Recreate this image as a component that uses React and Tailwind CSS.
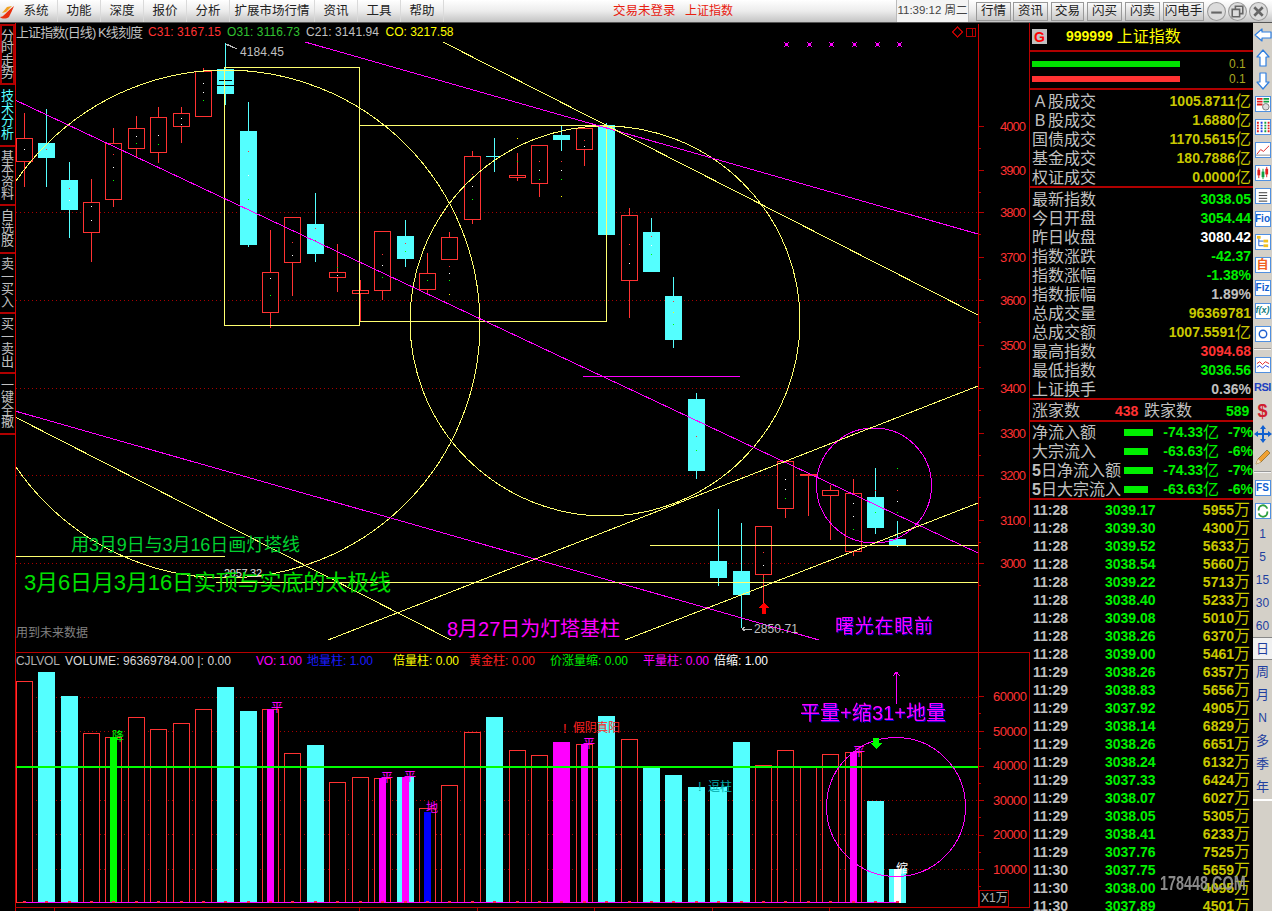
import React from "react";

const RED = "#ff3232";
const CY = "#54ffff";
const MG = "#ff00ff";
const YL = "#ffff70";
const GRID = "#a80000";
const AX = "#b80000";

const candles = [
  [24.5,113,138,161,187,"r"],[46.5,109,143,158,187,"c"],[69.5,162,180,210,238,"c"],[91.5,179,202,232,262,"r"],
  [113.5,128,143,199,207,"r"],[136.5,116,128,148,157,"r"],[158.5,107,117,152,163,"r"],[181.5,107,113,126,143,"r"],
  [203.5,68,71,116,117,"r"],[225.5,43,69,94,105,"c"],[248.5,102,131,245,247,"c"],[270.5,230,272,312,328,"r"],
  [292.5,217,217,262,296,"r"],[315.5,193,224,254,262,"c"],[337.5,244,272,277,292,"r"],[360.5,280,290,293,322,"r"],
  [382.5,231,231,290,300,"r"],[405.5,220,236,259,267,"c"],[427.5,253,273,289,295,"r"],[449.5,232,237,259,259,"r"],
  [472.5,151,156,219,224,"r"],[517.5,153,175,177,181,"r"],[539.5,145,145,183,197,"r"],[561.5,126,135,140,151,"c"],
  [584.5,128,128,149,166,"r"],[606.5,123,125,235,237,"c"],[629.5,208,215,280,318,"r"],[651.5,218,232,272,272,"c"],
  [673.5,277,296,340,348,"c"],[696.5,393,399,471,479,"c"],[718.5,509,561,578,586,"c"],[741.5,523,571,595,628,"c"],
  [763.5,526,526,574,603,"r"],[785.5,461,461,508,518,"r"],[830.5,485,490,495,540,"r"],[853.5,479,493,551,556,"r"],
  [875.5,468,497,528,534,"c"],[897.5,521,539,545,547,"c"],
];

const dots = [
  [24,149,"#fff"],[46,149,RED],[69,188,RED],[69,200,"#fff"],[91,206,"#fff"],[91,220,"#fff"],[113,154,RED],[113,167,"#fff"],[113,180,"#0f0"],
  [136,136,"#fff"],[136,143,"#0f0"],[158,135,"#fff"],[158,144,"#0f0"],[181,118,"#fff"],[181,124,"#fff"],[203,83,"#fff"],[203,92,"#fff"],[203,100,"#0f0"],
  [248,151,RED],[248,175,"#fff"],[248,199,"#0f0"],[270,278,"#fff"],[270,295,"#0f0"],[292,242,RED],[292,255,"#fff"],[315,228,RED],[315,240,"#0f0"],
  [337,259,RED],[337,267,"#0f0"],[337,275,"#fff"],[382,254,RED],[382,265,"#fff"],[382,277,"#0f0"],[405,243,RED],[405,251,"#0f0"],[427,280,"#0f0"],
  [449,266,RED],[449,273,"#fff"],[449,280,"#0f0"],[449,294,"#ff0"],[472,174,RED],[472,186,"#fff"],[472,199,"#0f0"],[517,138,"#ff0"],[517,161,"#0f0"],
  [539,161,RED],[539,170,"#fff"],[539,179,"#0f0"],[561,161,RED],[561,170,"#fff"],[561,179,"#0f0"],[561,196,"#ff0"],[584,140,RED],[584,146,"#fff"],
  [606,160,RED],[606,180,"#ff0"],[606,199,"#0f0"],[629,244,RED],[629,263,"#fff"],[651,236,RED],[651,245,"#fff"],[651,254,"#0f0"],
  [673,301,RED],[673,312,"#ff0"],[673,324,"#0f0"],[696,436,RED],[696,450,"#0f0"],[763,552,RED],[763,565,"#fff"],[763,578,"#0f0"],
  [785,479,"#fff"],[785,489,"#fff"],[785,498,"#0f0"],[853,503,"#fff"],[853,516,"#fff"],[853,529,"#0f0"],[875,490,RED],[875,512,"#0f0"],
  [897,468,"#0f0"],[897,490,RED],[897,501,"#fff"],[897,512,"#0f0"],
];

const vols = [
  [24.5,681,"r"],[46.5,672,"c"],[69.5,696,"c"],[91.5,733,"r"],[113.5,737,"r","#00ff00"],[136.5,717,"r"],[158.5,729,"r"],[181.5,723,"r"],
  [203.5,709,"r"],[225.5,687,"c"],[248.5,711,"c"],[270.5,709,"r",MG],[292.5,753,"r"],[315.5,745,"c"],[337.5,782,"r"],[360.5,777,"r"],
  [382.5,778,"r",MG],[405.5,777,"c",MG],[427.5,808,"r","#0000ff",812],[449.5,785,"r"],[472.5,732,"r"],[494.5,717,"c"],[517.5,750,"r"],[539.5,755,"r"],
  [561.5,742,"m"],[584.5,744,"r",MG],[606.5,716,"c"],[629.5,739,"r"],[651.5,767,"c"],[673.5,775,"c"],[696.5,787,"c"],[718.5,787,"c"],
  [741.5,742,"c"],[763.5,765,"r"],[785.5,750,"r"],[808.5,767,"r"],[830.5,754,"r"],[853.5,752,"r",MG],[875.5,801,"c"],[897.5,869,"c","#ffffff"],
];

const priceAxis = [[126,"4000"],[170,"3900"],[212,"3800"],[257,"3700"],[300,"3600"],[345,"3500"],[388,"3400"],[433,"3300"],[475,"3200"],[520,"3100"],[563,"3000"]];
const volAxis = [[696,"60000"],[731,"50000"],[765.5,"40000"],[800,"30000"],[834.5,"20000"],[869,"10000"]];

const L = ({ p, c = YL, w = 1 }) => <line x1={p[0]} y1={p[1]} x2={p[2]} y2={p[3]} stroke={c} strokeWidth={w} />;
const T = ({ x, y, c, s = 12, len, anchor, children, className }) => (
  <text x={x} y={y} fill={c} fontSize={s} dominantBaseline="central" textAnchor={anchor} textLength={len} lengthAdjust={len ? "spacing" : undefined} className={className} stroke="none">{children}</text>
);

function Chart() {
  return (
    <svg width="1015" height="888" viewBox="15 23 1015 888" shapeRendering="crispEdges" className="block shrink-0">
      <defs>
        <clipPath id="pp"><rect x="16" y="24" width="962" height="628" /></clipPath>
      </defs>
      {[212,300,388,475,563].map((y) => <line key={y} x1="16" x2="978" y1={y+0.5} y2={y+0.5} stroke={GRID} strokeDasharray="1 3" />)}
      {[697,731,766,800,834,869].map((y) => <line key={y} x1="16" x2="978" y1={y+0.5} y2={y+0.5} stroke={GRID} strokeDasharray="1 3" />)}
      {candles.map(([x,wt,bt,bb,wb,k]) => {
        const c = k === "r" ? RED : CY;
        return (
          <g key={x}>
            <line x1={x} x2={x} y1={wt} y2={wb} stroke={c} />
            {k === "r" ? <rect x={x-8} y={bt+0.5} width="16" height={bb-bt} fill="#000" stroke={c} /> : <rect x={x-8.5} y={bt} width="17" height={bb-bt} fill={c} />}
          </g>
        );
      })}
      <path d="M494.5 138V172M486 156.5H501" stroke={CY} />
      <path d="M808.5 474V516M800 474.5H817" stroke={RED} /><rect x="800" y="474" width="17" height="2" fill={RED} />
      <rect x="219" y="80" width="13" height="1" fill="#000" /><rect x="217" y="85" width="17" height="1" fill="#000" />
      {dots.map(([x,y,c],i) => <rect key={i} x={x} y={y} width="1" height="1" fill={c} />)}
      <g clipPath="url(#pp)" fill="none">
        <circle cx="226" cy="324" r="254" stroke={YL} />
        <circle cx="605" cy="321" r="195" stroke={YL} />
        <circle cx="874" cy="485.5" r="57.5" stroke={MG} />
        <rect x="224.5" y="67.5" width="135" height="258" stroke={YL} />
        <path d="M359.5 125.5H606.5V321.5H359.5" stroke={YL} />
        <L p={[15,100,978,553]} c={MG} /><L p={[305,42,978,234]} c={MG} /><L p={[15,411,819,640]} c={MG} />
        <L p={[583,376.5,740,376.5]} c={MG} />
        <L p={[443,42,978,315]} /><L p={[328,640,978,386]} /><L p={[625,640,978,503]} /><L p={[15,417,451,640]} />
        <L p={[16,556.5,225,556.5]} /><L p={[216,582.5,978,582.5]} /><L p={[650,545.5,978,545.5]} />
      </g>
      {[786,809,831,854,877,899].map((x) => <path key={x} d={`M${x-2} 42h1v1h-1zM${x+2} 42h1v1h-1zM${x-1} 43h3v3h-3zM${x-2} 46h1v1h-1zM${x+2} 46h1v1h-1z`} fill={MG} stroke="none" />)}
      <path d="M957.5 27L962.5 32L957.5 37L952.5 32Z" fill="none" stroke={AX} />
      <path d="M966.5 28.5H975.5V36.5H966.5ZM972.5 28.5V36.5" fill="none" stroke={AX} />
      <path d="M225.5 44H229M226 44L229 46M226 44L237 49" stroke="#bbb" fill="none" />
      <path d="M742 629H752M742 629L745 627M742 629L745 631" stroke="#bbb" fill="none" />
      <path d="M764 602L769 608H766V614H762V608H759Z" fill="#ff0000" stroke="none" />
      <T x="16" y="32" c="#c0c0c0" s={13} len={127}>上证指数(日线) K线刻度</T>
      <T x="148" y="32" c={RED} len={73}>C31: 3167.15</T>
      <T x="227" y="32" c="#30c030" len={73}>O31: 3116.73</T>
      <T x="306" y="32" c="#c0c0c0" len={73}>C21: 3141.94</T>
      <T x="385.5" y="32" c="#ffff00" len={68}>CO: 3217.58</T>
      <T x="240" y="52" c="#c0c0c0" len={44}>4184.45</T>
      <T x="224" y="573" c="#e0e0e0" s={11} len={38}>2957.32</T>
      <T x="754" y="629" c="#c0c0c0" len={44}>2850.71</T>
      <T x="16" y="633" c="#808080" s={12} len={72}>用到未来数据</T>
      <T x="71" y="545" c="#00d030" s={18} len={229}>用3月9日与3月16日画灯塔线</T>
      <T x="24" y="582" c="#00e000" s={22} len={367}>3月6日月3月16日实顶与实底的太极线</T>
      <T x="447" y="629" c={MG} s={20} len={173}>8月27日为灯塔基柱</T>
      <T x="835" y="626" c={MG} s={19} len={98} className="[filter:drop-shadow(1px_1px_0_#0000c0)]">曙光在眼前</T>

      {vols.map(([x,t,k,inner,it]) => (
        <g key={x}>
          {k === "r" && <rect x={x-8} y={t+0.5} width="16" height={902-t} fill="#000" stroke={RED} />}
          {k === "c" && <rect x={x-8.5} y={t} width="17" height={903-t} fill={CY} />}
          {k === "m" && <rect x={x-8.5} y={t} width="17" height={903-t} fill={MG} />}
          {inner && <rect x={x-3.5} y={it || t} width="7" height={903-(it || t)} fill={inner} />}
        </g>
      ))}
      <rect x="16" y="766" width="962" height="2" fill="#00ff00" />
      <rect x="24" y="902" width="873" height="1" fill={MG} />
      {vols.map(([x]) => <rect key={x} x={x-1.5} y="901" width="3" height="2" fill="#ff2050" />)}
      <circle cx="896" cy="807" r="69.5" fill="none" stroke={MG} />
      <path d="M896.5 704V672M896.5 672L893 676M896.5 672L900 676" stroke={MG} fill="none" />
      <path d="M873 738H879V743H882L876 749L870 743H873Z" fill="#00ff00" stroke="none" />
      <T x="16" y="660.5" c="#b0b0b0" len={44}>CJLVOL</T>
      <T x="65" y="660.5" c="#d8d8d8" len={166}>VOLUME: 96369784.00 |: 0.00</T>
      <T x="256" y="660.5" c={MG} len={46}>VO: 1.00</T>
      <T x="307" y="660.5" c="#1c1cff" len={66}>地量柱: 1.00</T>
      <T x="393" y="660.5" c="#ffff00" len={66}>倍量柱: 0.00</T>
      <T x="469" y="660.5" c="#ff2020" len={66}>黄金柱: 0.00</T>
      <T x="550" y="660.5" c="#00f000" len={78}>价涨量缩: 0.00</T>
      <T x="643" y="660.5" c={MG} len={66}>平量柱: 0.00</T>
      <T x="714" y="660.5" c="#ffffff" len={54}>倍缩: 1.00</T>
      <T x="271" y="708" c={MG}>平</T><T x="381" y="778" c={MG}>平</T><T x="404" y="777" c={MG}>平</T>
      <T x="583" y="744" c={MG}>平</T><T x="853" y="752" c={MG}>平</T>
      <T x="426" y="808" c={MG}>地</T><T x="112" y="737" c="#00ff00">降</T><T x="896" y="869" c="#ffffff">缩</T>
      <T x="563" y="728" c="#ff2020" s={13}>!</T><T x="573" y="728" c="#ff2020" len={47}>假阴真阳</T>
      <T x="698" y="786" c="#00a8a8" s={13}>!</T><T x="708" y="787" c="#00a8a8">逗柱</T>
      <T x="800" y="713" c={MG} s={20} len={146} className="[filter:drop-shadow(1px_1px_0_#0000c0)]">平量+缩31+地量</T>

      <rect x="15" y="23" width="1" height="888" fill="#d00000" />
      <rect x="978" y="24" width="1" height="883" fill="#d00000" />
      <rect x="1029" y="23" width="1" height="504" fill={AX} />
      <rect x="1029" y="652" width="1" height="255" fill={AX} />
      <rect x="15" y="652" width="1015" height="1" fill={AX} />
      <rect x="15" y="907" width="1015" height="1" fill={AX} />
      {priceAxis.map(([y,t]) => (
        <g key={t}>
          <rect x="979" y={y} width="5" height="1" fill={AX} />
          <rect x="979" y={y+22} width="2" height="1" fill={AX} />
          <T x="1000" y={y} c={RED} s={13} len={26}>{t}</T>
        </g>
      ))}
      {volAxis.map(([y,t]) => (
        <g key={t}>
          <rect x="979" y={y} width="5" height="1" fill={AX} />
          <rect x="979" y={y+17} width="2" height="1" fill={AX} />
          <T x="993" y={y} c={RED} s={13} len={34}>{t}</T>
        </g>
      ))}
      <rect x="979.5" y="890.5" width="29" height="16" fill="none" stroke={AX} />
      <T x="981" y="898" c="#b0b0b0" s={12}>X1万</T>
      {[54,359,477,594,712,829].map((x) => <rect key={x} x={x} y="908" width="1" height="3" fill={AX} />)}
    </svg>
  );
}

const Tab = ({ t, h, box }) => (
  <div className={`flex flex-col items-center justify-center w-[15px] text-[13px] leading-[12.5px] text-[#c0c0c0] ${box ? "border-2 border-[#b00000]" : "border-t-2 border-[#b00000]"}`} style={{ height: h }}>
    {t.split("").map((c, i) => <span key={i} className="block h-[12.5px]">{c}</span>)}
  </div>
);

function LeftTabs() {
  return (
    <div className="w-[15px] shrink-0 flex flex-col pt-px overflow-hidden">
      <Tab t="分时走势" h={61} box />
      <div className="flex flex-col items-center justify-center w-[15px] h-[60px] text-[13px] leading-[12.5px] text-[#54ffff]">
        {"技术分析".split("").map((c, i) => <span key={i} className="block h-[12.5px]">{c}</span>)}
      </div>
      <Tab t="基本资料" h={59} />
      <Tab t="自选股" h={48} />
      <Tab t="卖一买入" h={60} />
      <Tab t="买一卖出" h={60} />
      <Tab t="一键全撤" h={61} />
      <div className="w-[15px] border-t-2 border-[#b00000]" />
    </div>
  );
}

const Row = ({ label, value, unit, color }) => (
  <div className="flex items-center justify-between h-[19px] pl-[2px] pr-[2px]">
    <span className="text-[16px] text-[#c0c0c0] leading-[19px]">{label}</span>
    <span className={`flex items-center leading-[19px] ${color}`}>
      <span className="text-[14px] font-bold">{value}</span>
      {unit && <span className="text-[16px]">{unit}</span>}
    </span>
  </div>
);

const Flow = ({ label, w, v, p }) => (
  <div className="flex items-center h-[19px] pl-[2px] text-[#00f000]">
    <span className="text-[16px] font-normal text-[#c0c0c0] w-[92px] shrink-0 whitespace-nowrap leading-[19px]">{label}</span>
    <span className="w-[39px] shrink-0"><span className="block h-[7px] bg-[#00f000]" style={{ width: w }} /></span>
    <span className="w-[56px] shrink-0 flex items-center justify-end"><span className="text-[14px]">{v}</span><span className="text-[16px] font-normal">亿</span></span>
    <span className="text-[14px] ml-[9px] w-[24px] shrink-0 text-right">{p}</span>
  </div>
);

const ticks = `11:28 3039.17 5955
11:28 3039.30 4300
11:28 3039.52 5633
11:28 3038.54 5660
11:28 3039.22 5713
11:28 3038.40 5233
11:28 3039.08 5010
11:28 3038.26 6370
11:28 3039.00 5461
11:29 3038.26 6357
11:29 3038.83 5656
11:29 3037.92 4905
11:29 3038.14 6829
11:29 3038.26 6651
11:29 3038.24 6132
11:29 3037.33 6424
11:29 3038.07 6027
11:29 3038.05 5305
11:29 3038.41 6233
11:29 3037.76 7525
11:30 3037.75 5659
11:30 3038.00 4095
11:30 3037.89 4501`.split("\n").map((l) => l.split(" "));

function RightPanel() {
  const sep = "border-b-2 border-[#b00000]";
  const OL = "text-[#c8c800]";
  const GR = "text-[#00f000]";
  return (
    <div className="relative w-[223px] shrink-0 overflow-hidden">
      <div className={`h-[29px] flex items-center pl-[2px] ${sep}`}>
        <span className="w-[15px] h-[15px] bg-[#c0c0c0] text-[#ff0000] text-[14px] font-bold flex items-center justify-center leading-none">G</span>
        <span className="ml-[19px] text-[14px] font-bold text-[#ffff00]">999999</span>
        <span className="ml-[4px] text-[16px] text-[#ffff00]">上证指数</span>
      </div>
      <div className={`h-[38px] pt-[3px] relative flex flex-col justify-center gap-[9px] pl-[2px] ${sep}`}>
        <div className="flex items-center h-[6px]"><span className="block w-[148px] h-[6px] bg-[#00e000]" /><span className="ml-[49px] text-[12px] text-[#a8a820]">0.1</span></div>
        <div className="flex items-center h-[6px]"><span className="block w-[148px] h-[6px] bg-[#ff3232]" /><span className="ml-[49px] text-[12px] text-[#a8a820]">0.1</span></div>
      </div>
      <div className={`h-[98px] pt-[2px] ${sep}`}>
        <Row label={<><span className="inline-block w-4 text-center">A</span>股成交</>} value="1005.8711" unit="亿" color={OL} />
        <Row label={<><span className="inline-block w-4 text-center">B</span>股成交</>} value="1.6880" unit="亿" color={OL} />
        <Row label="国债成交" value="1170.5615" unit="亿" color={OL} />
        <Row label="基金成交" value="180.7886" unit="亿" color={OL} />
        <Row label="权证成交" value="0.0000" unit="亿" color={OL} />
      </div>
      <div className={`h-[212px] pt-[2px] ${sep}`}>
        <Row label="最新指数" value="3038.05" color={GR} />
        <Row label="今日开盘" value="3054.44" color={GR} />
        <Row label="昨日收盘" value="3080.42" color="text-white" />
        <Row label="指数涨跌" value="-42.37" color={GR} />
        <Row label="指数涨幅" value="-1.38%" color={GR} />
        <Row label="指数振幅" value="1.89%" color="text-[#c0c0c0]" />
        <Row label="总成交量" value="96369781" color={OL} />
        <Row label="总成交额" value="1007.5591" unit="亿" color={OL} />
        <Row label="最高指数" value="3094.68" color="text-[#ff3232]" />
        <Row label="最低指数" value="3036.56" color={GR} />
        <Row label="上证换手" value="0.36%" color="text-[#c0c0c0]" />
      </div>
      <div className={`h-[22px] pt-[2px] flex items-center pl-[2px] ${sep}`}>
        <span className="text-[16px] text-[#c0c0c0] w-[83px]">涨家数</span>
        <span className="text-[14px] font-bold text-[#ff3232] w-[29px]">438</span>
        <span className="text-[16px] text-[#c0c0c0] w-[82px]">跌家数</span>
        <span className="text-[14px] font-bold text-[#00f000]">589</span>
      </div>
      <div className={`h-[78px] pt-px font-bold ${sep}`}>
        <Flow label="净流入额" w={29} v="-74.33" p="-7%" />
        <Flow label="大宗流入" w={24} v="-63.63" p="-6%" />
        <Flow label={<><b>5</b>日净流入额</>} w={29} v="-74.33" p="-7%" />
        <Flow label={<><b>5</b>日大宗流入</>} w={24} v="-63.63" p="-6%" />
      </div>
      <div className="pt-px">
        {ticks.map(([t, p, v], i) => (
          <div key={i} className="flex items-center h-[18px] text-[14px] font-bold leading-[18px]">
            <span className="w-[75px] pl-[3px] text-[#c0c0c0] shrink-0">{t}</span>
            <span className="w-[72px] text-[#00f000] shrink-0">{p}</span>
            <span className="w-[57px] text-right text-[#c8c800] shrink-0">{v}</span>
            <span className="text-[16px] font-normal text-[#c8c800]">万</span>
          </div>
        ))}
      </div>
      <div className="absolute left-[130px] top-[850px] text-[20px] font-bold text-[#9a9a9a] opacity-90 leading-none origin-left scale-x-[0.72] whitespace-nowrap blur-[0.4px]">178448.COM</div>
    </div>
  );
}

const Box = ({ children, color = "text-[#1060d0]" }) => (
  <span className={`w-[16px] h-[16px] border border-[#5090e0] bg-white flex items-center justify-center text-[10px] font-bold leading-none overflow-hidden ${color}`}>{children}</span>
);
const Cell = ({ children, h = 23, cls = "" }) => <div className={`flex items-center justify-center shrink-0 ${cls}`} style={{ height: h }}>{children}</div>;
const Arrow = ({ d }) => <svg width="18" height="18" viewBox="0 0 18 18"><path d={d} fill="#fff" stroke="#2f7fe0" strokeWidth="1.2" strokeLinejoin="round" /></svg>;

function Toolbar() {
  const txt = "text-[12px] text-[#1f3f9f]";
  const cjk = "text-[13px] text-[#1f3f9f]";
  return (
    <div className="w-[19px] shrink-0 bg-[#d4d0c8] flex flex-col items-center overflow-hidden">
      <Cell><Arrow d="M1 9L8 3V6H17V12H8V15Z" /></Cell>
      <Cell><Arrow d="M9 1L15 8H12V17H6V8H3Z" /></Cell>
      <Cell><Arrow d="M9 17L15 10H12V1H6V10H3Z" /></Cell>
      <Cell><Box><svg width="14" height="14" viewBox="0 0 15 15"><path d="M1 2H7M1 5H7M1 8H7" stroke="#e02020" strokeWidth="2" /><path d="M8 2H14M8 5H14" stroke="#10a040" strokeWidth="2" /><circle cx="10.5" cy="10.5" r="3.5" fill="#ddd" stroke="#777" /></svg></Box></Cell>
      <Cell><Box><svg width="14" height="14" viewBox="0 0 15 15"><path d="M2 2V13" stroke="#e02020" strokeWidth="2" strokeDasharray="2 1" /><path d="M6 2V13" stroke="#2040e0" strokeWidth="2" strokeDasharray="2 1" /><path d="M10 2V13" stroke="#10a040" strokeWidth="2" strokeDasharray="2 1" /><path d="M13.5 2V13" stroke="#e02020" strokeWidth="2" strokeDasharray="2 1" /></svg></Box></Cell>
      <Cell><Box><svg width="14" height="14" viewBox="0 0 15 15"><path d="M1 12L5 7L8 9L14 3" stroke="#e02020" fill="none" /><path d="M0 13H15" stroke="#888" /></svg></Box></Cell>
      <Cell><Box><svg width="14" height="14" viewBox="0 0 15 15"><path d="M3 2V13M11.500 1V12" stroke="#e02020" /><rect x="1.500" y="4" width="3" height="6" fill="#e02020" /><rect x="10" y="3" width="3" height="6" fill="#e02020" /><path d="M7.500 3V14" stroke="#10a040" /><rect x="6" y="6" width="3" height="6" fill="#10a040" /></svg></Box></Cell>
      <Cell><Box><svg width="14" height="14" viewBox="0 0 15 15"><path d="M3 4H12M3 7H12M3 10H12M3 13H12" stroke="#333" /></svg></Box></Cell>
      <Cell><Box>Fio</Box></Cell>
      <Cell><Box><svg width="14" height="14" viewBox="0 0 15 15"><rect x="1" y="1" width="4" height="3" fill="#f0c020" /><rect x="8" y="5" width="5" height="3" fill="#f0c020" /><rect x="8" y="10" width="5" height="3" fill="#f0c020" /><path d="M3 4V11.500H8M3 6.500H8" stroke="#2060d0" fill="none" /></svg></Box></Cell>
      <Cell><Box color="text-[#f06020]"><span className="text-[12px]">自</span></Box></Cell>
      <Cell><Box>Fiz</Box></Cell>
      <Cell><Box color="text-[#108080]"><span className="text-[9px] italic">f(x)</span></Box></Cell>
      <Cell><Box><svg width="14" height="14" viewBox="0 0 15 15"><circle cx="7.500" cy="7.500" r="4" fill="none" stroke="#2060d0" strokeWidth="1.500" /></svg></Box></Cell>
      <Cell h={8}><span className="block w-[17px] h-[2px] bg-[#f4f4f4] border-t border-[#999]" /></Cell>
      <Cell><Box><svg width="14" height="14" viewBox="0 0 15 15"><path d="M1 6L4 4L7 7L10 4L14 6" stroke="#e02020" fill="none" /><path d="M1 10L4 8L7 11L10 8L14 10" stroke="#2040e0" fill="none" /></svg></Box></Cell>
      <Cell><span className="text-[11px] font-bold text-[#2040c0] tracking-[-0.5px]">RSI</span></Cell>
      <Cell><span className="text-[18px] font-bold text-[#d02030] leading-none">$</span></Cell>
      <Cell><svg width="18" height="18" viewBox="0 0 18 18"><path d="M9 0L12 4H10V8H14V6L18 9L14 12V10H10V14H12L9 18L6 14H8V10H4V12L0 9L4 6V8H8V4H6Z" fill="#1060d0" /></svg></Cell>
      <Cell><svg width="18" height="18" viewBox="0 0 18 18"><path d="M2 16L4 11L13 2L16 5L7 14Z" fill="#f0a030" stroke="#806020" strokeWidth="0.700" /><path d="M2 16L4 11L7 14Z" fill="#f4e0c0" /></svg></Cell>
      <Cell h={8}><span className="block w-[17px] h-[2px] bg-[#f4f4f4] border-t border-[#999]" /></Cell>
      <Cell><Box>FS</Box></Cell>
      <Cell><Box><svg width="14" height="14" viewBox="0 0 15 15"><path d="M3 7A4.500 4.500 0 0 1 12 5M12 8A4.500 4.500 0 0 1 3 10" stroke="#30a040" strokeWidth="2" fill="none" /></svg></Box></Cell>
      <Cell cls={txt}>1</Cell>
      <Cell cls={txt}>5</Cell>
      <Cell cls={txt}>15</Cell>
      <Cell cls={txt}>30</Cell>
      <Cell cls={txt}>60</Cell>
      <Cell cls={`${cjk} w-full bg-[#f0f0f0] border-y border-[#888]`}>日</Cell>
      <Cell cls={cjk}>周</Cell>
      <Cell cls={cjk}>月</Cell>
      <Cell cls={txt}>N</Cell>
      <Cell cls={cjk}>多</Cell>
      <Cell cls={cjk}>季</Cell>
      <Cell cls={cjk}>年</Cell>
      <span className="block w-full h-[2px] bg-white mt-px" />
    </div>
  );
}

const menu = [["系统",43],["功能",43],["深度",43],["报价",43],["分析",43],["扩展市场行情",85],["资讯",43],["工具",43],["帮助",43]];
const btns = [["行情",35,0],["资讯",35,2],["交易",33,3],["闪买",35,3],["闪卖",35,3],["闪电手",41,3]];

function TopBar() {
  return (
    <div className="h-[23px] flex items-center bg-gradient-to-b from-[#ffffff] via-[#ececec] to-[#c4c4c4] border-b border-[#555] text-[#222] overflow-hidden">
      <svg width="15" height="15" viewBox="0 0 15 15" className="shrink-0">
        <path d="M0 13C4 13 6 8 14 2C12 7 11 9 9 13C6 15 2 15 0 13Z" fill="#e83010" />
        <path d="M2 9L7 3L12 2L6 8Z" fill="#f0a020" />
      </svg>
      {menu.map(([m, w]) => <div key={m} style={{ width: w }} className="shrink-0 text-center text-[12.5px] leading-[22px] border-r border-[#dadada]">{m}</div>)}
      <span className="ml-[169px] w-[72px] shrink-0 text-[12.5px] text-[#e82010]">交易未登录</span>
      <span className="w-[48px] shrink-0 text-[12px] text-[#e82010]">上证指数</span>
      <div className="ml-[163px] w-[73px] h-[22px] shrink-0 flex items-center justify-center bg-[#f4f4f4] border-x border-[#bbb] text-[11.5px] text-[#444] whitespace-nowrap">11:39:12 周二</div>
      <div className="ml-[7px] flex items-center">
        {btns.map(([b, w, m]) => (
          <button key={b} style={{ width: w, marginLeft: m }} className="h-[19px] shrink-0 text-[12.5px] leading-[17px] text-[#222] bg-gradient-to-b from-[#fafafa] to-[#c8c8c8] border border-[#999] whitespace-nowrap">{b}</button>
        ))}
      </div>
      <div className="ml-[3px] flex items-center gap-[2px]">
        {[
          <path key="a" d="M4 10H14" stroke="#666" strokeWidth="2" />,
          <path key="b" d="M4 7H11V14H4ZM7 7V4H14V11H11" stroke="#666" strokeWidth="1.500" fill="none" />,
          <path key="c" d="M5 5L13 13M13 5L5 13" stroke="#666" strokeWidth="2.500" />,
        ].map((p, i) => (
          <svg key={i} width="19" height="19" viewBox="0 0 18 18" className="shrink-0">
            <circle cx="9" cy="9" r="8.500" fill="#dcdcdc" stroke="#999" />
            {p}
          </svg>
        ))}
      </div>
    </div>
  );
}

export default function App() {
  return (
    <div className="relative w-[1272px] h-[911px] overflow-hidden bg-black font-['Liberation_Sans','Noto_Sans_CJK_SC',sans-serif]">
      <TopBar />
      <div className="flex h-[888px]">
        <LeftTabs />
        <Chart />
        <RightPanel />
        <Toolbar />
      </div>
    </div>
  );
}
